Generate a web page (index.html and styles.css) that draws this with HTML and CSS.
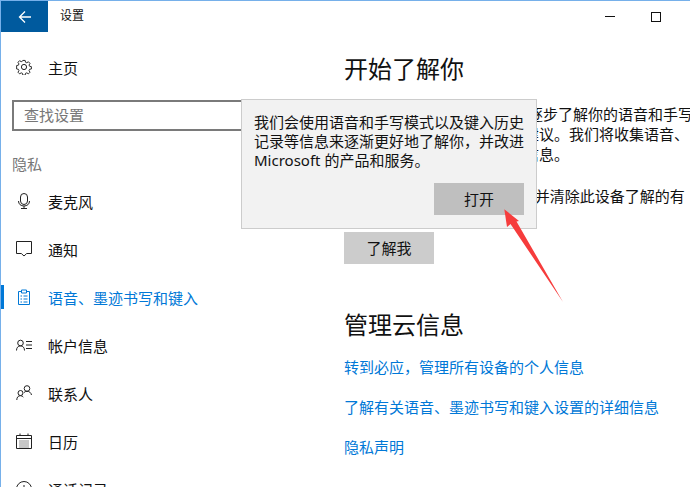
FILE: index.html
```html
<!DOCTYPE html>
<html lang="zh-CN">
<head>
    <meta charset="UTF-8">
    <title>设置</title>
    <link rel="stylesheet" href="styles.css">
</head>
<body>
<div class="window">
    <div class="titlebar">
        <div class="backbtn">
            <svg width="16" height="16" viewBox="0 0 16 16"><path d="M14 8H2.5M8 2.5L2.5 8L8 13.5" fill="none" stroke="#fff" stroke-width="1.3"/></svg>
        </div>
        <div class="title">设置</div>
        <div class="winbtns">
            <div class="minbtn"></div>
            <div class="maxbtn"></div>
        </div>
    </div>
    <div class="content">
        <div class="sidebar">
            <div class="navitem home">
                <svg class="navicon" width="16" height="16" viewBox="0 0 16 16"><path d="M6.7.7h2.6l.4 2 1.4.6 1.8-1.1 1.8 1.8-1.1 1.8.6 1.4 2 .4v2.6l-2 .4-.6 1.4 1.1 1.8-1.8 1.8-1.8-1.1-1.4.6-.4 2H6.7l-.4-2-1.4-.6-1.8 1.1-1.8-1.8 1.1-1.8-.6-1.4-2-.4V6.4l2-.4.6-1.4-1.1-1.8 1.8-1.8 1.8 1.1 1.4-.6z" transform="translate(.8 .8) scale(.9)" fill="none" stroke="#222" stroke-width="1.05"/><circle cx="8" cy="8" r="2.6" fill="none" stroke="#222"/></svg>
                <span>主页</span>
            </div>
            <div class="searchbox">查找设置</div>
            <div class="navgroup">隐私</div>
            <div class="navitem">
                <svg class="navicon" width="16" height="16" viewBox="0 0 16 16"><rect x="4.5" y=".5" width="7" height="11" rx="3.5" fill="none" stroke="#222"/><path d="M2.5 8c0 3.2 2.3 5 5.5 5s5.500-1.800 5.500-5M8 13v2.500M5 15.500h6" fill="none" stroke="#222"/></svg>
                <span>麦克风</span>
            </div>
            <div class="navitem">
                <svg class="navicon" width="16" height="16" viewBox="0 0 16 16"><path d="M.5.5h15v12h-4.800L8 15l-2.700-2.500H.5z" fill="none" stroke="#222"/></svg>
                <span>通知</span>
            </div>
            <div class="navitem active">
                <svg class="navicon" width="16" height="16" viewBox="0 0 16 16"><path d="M5.500 2.500h-3v13h11v-13h-3M5.500 1h5v3h-5zM4.500 7h1.500M7.500 7h4M4.500 10h1.500M7.500 10h4M4.500 13h1.500M7.500 13h4" fill="none" stroke="#0078d7"/></svg>
                <span>语音、墨迹书写和键入</span>
            </div>
            <div class="navitem">
                <svg class="navicon" width="16" height="16" viewBox="0 0 16 16"><circle cx="4.5" cy="6" r="2.800" fill="none" stroke="#222"/><path d="M.5 13.500c0-2.800 1.500-4.600 4-4.600s4 1.800 4 4.600M10 4.500h6M10 8h6M10 11.500h6" fill="none" stroke="#222"/></svg>
                <span>帐户信息</span>
            </div>
            <div class="navitem">
                <svg class="navicon" width="16" height="16" viewBox="0 0 16 16"><circle cx="11" cy="3.500" r="2.800" fill="none" stroke="#222"/><circle cx="4.500" cy="8" r="2.500" fill="none" stroke="#222"/><path d="M.8 15c0-2.700 1.300-4.300 3.700-4.300 1.200 0 2.200.5 2.800 1.400M8 7.500c.8-.8 1.800-1.200 3-1.200 2.300 0 4 1.300 4.500 3.700" fill="none" stroke="#222"/></svg>
                <span>联系人</span>
            </div>
            <div class="navitem">
                <svg class="navicon" width="16" height="16" viewBox="0 0 16 16"><path d="M.5 2.500h15v13H.5zM.5 5.500h15M4 .5v2M12 .5v2" fill="none" stroke="#222"/><path d="M3.500 8h9M3.500 10h9M3.500 12h9M3.500 14h9" stroke="#222" stroke-dasharray="1 1"/></svg>
                <span>日历</span>
            </div>
            <div class="navitem">
                <svg class="navicon" width="16" height="16" viewBox="0 0 16 16"><circle cx="8" cy="8" r="7.500" fill="none" stroke="#222"/><path d="M8 4v4.500h3" fill="none" stroke="#222"/></svg>
                <span>通话记录</span>
            </div>
        </div>
        <div class="main">
            <h1 class="heading">开始了解你</h1>
            <p class="intro">你的设备可以通过 Cortana 逐步了解你的语音和手写<br>习惯，以便为你提供更好的建议。我们将收集语音、<br>手写和键入历史记录等相关信息。</p>
            <p class="intro clear">前往“语音、墨迹书写和键入”并清除此设备了解的有<br>关你的信息。</p>
            <div class="btn">了解我</div>
            <h1 class="heading second">管理云信息</h1>
            <a class="link first">转到必应，管理所有设备的个人信息</a>
            <a class="link">了解有关语音、墨迹书写和键入设置的详细信息</a>
            <a class="link">隐私声明</a>
        </div>
    </div>
    <div class="popup">
        <p class="popuptext">我们会使用语音和手写模式以及键入历史记录等信息来逐渐更好地了解你，并改进 Microsoft 的产品和服务。</p>
        <div class="popupfoot"><div class="btn dark">打开</div></div>
    </div>
    <svg class="arrow" width="75" height="105" viewBox="0 0 75 105"><polygon points="9.3,9.3 24,21 21.5,21.5 68,102 15.5,24 12,27" fill="#f63c3c"/></svg>
</div>
</body>
</html>
```

FILE: styles.css
```css
html, body {
    margin: 0;
    height: 100%;
    overflow: hidden;
}
body {
    background-color: #fff;
    font-family: "Noto Sans", "Noto Sans CJK SC", sans-serif;
    font-size: 15px;
    color: #111;
}
.window {
    position: relative;
    height: 487px;
    box-sizing: border-box;
    border-top: 1px solid #76b0ea;
    border-left: 1px solid #76b0ea;
    overflow: hidden;
}
.titlebar {
    display: flex;
    align-items: center;
    height: 31px;
}
.backbtn {
    width: 47px;
    height: 31px;
    background-color: #005a9e;
    display: flex;
    align-items: center;
    justify-content: center;
}
.title {
    margin: -4px 0 0 12px;
    font-size: 12px;
    flex: 1;
}
.winbtns {
    display: flex;
    align-items: center;
    gap: 36px;
    margin-right: 29px;
}
.minbtn {
    width: 10px;
    height: 1px;
    background-color: #111;
}
.maxbtn {
    width: 8px;
    height: 8px;
    border: 1px solid #111;
}
.content {
    display: flex;
}
.sidebar {
    width: 343px;
    flex-shrink: 0;
}
.navitem {
    display: flex;
    align-items: center;
    gap: 16px;
    height: 48px;
    padding-left: 15px;
    box-sizing: border-box;
}
.home {
    margin-top: 11px;
}
.navicon {
    flex-shrink: 0;
}
.active {
    color: #0078d7;
    position: relative;
}
.active::before {
    content: "";
    position: absolute;
    left: 0;
    top: 12px;
    width: 3px;
    height: 24px;
    background-color: #0078d7;
}
.searchbox {
    margin: 9px 0 0 11px;
    width: 290px;
    height: 31px;
    box-sizing: border-box;
    border: 2px solid #7a7a7a;
    padding-left: 10px;
    line-height: 27px;
    color: #777;
}
.navgroup {
    margin: 21px 0 1px 11px;
    line-height: 24px;
    color: #777;
}
.main {
    flex: 1;
    white-space: nowrap;
    overflow: hidden;
}
.heading {
    margin: 19px 0 0;
    font-size: 24px;
    font-weight: normal;
    line-height: 36px;
}
.intro {
    margin: 17px 0 0;
    line-height: 20px;
}
.clear {
    margin-top: 22px;
}
.btn {
    width: 90px;
    height: 32px;
    line-height: 32px;
    text-align: center;
    background-color: #ccc;
}
.main .btn {
    margin-top: 6px;
}
.second {
    margin-top: 43px;
}
.link {
    display: block;
    margin-top: 20px;
    line-height: 20px;
    color: #0078d7;
}
.first {
    margin-top: 14px;
}
.popup {
    position: absolute;
    left: 240px;
    top: 98px;
    width: 296px;
    height: 130px;
    box-sizing: border-box;
    background-color: #f2f2f2;
    border: 1px solid #ccc;
    padding: 13px 12px 12px;
}
.popuptext {
    margin: 0;
    line-height: 19px;
}
.popupfoot {
    display: flex;
    justify-content: flex-end;
    margin-top: 13px;
}
.dark {
    background-color: #bfbfbf;
}
.arrow {
    position: absolute;
    left: 494px;
    top: 199px;
}
```
